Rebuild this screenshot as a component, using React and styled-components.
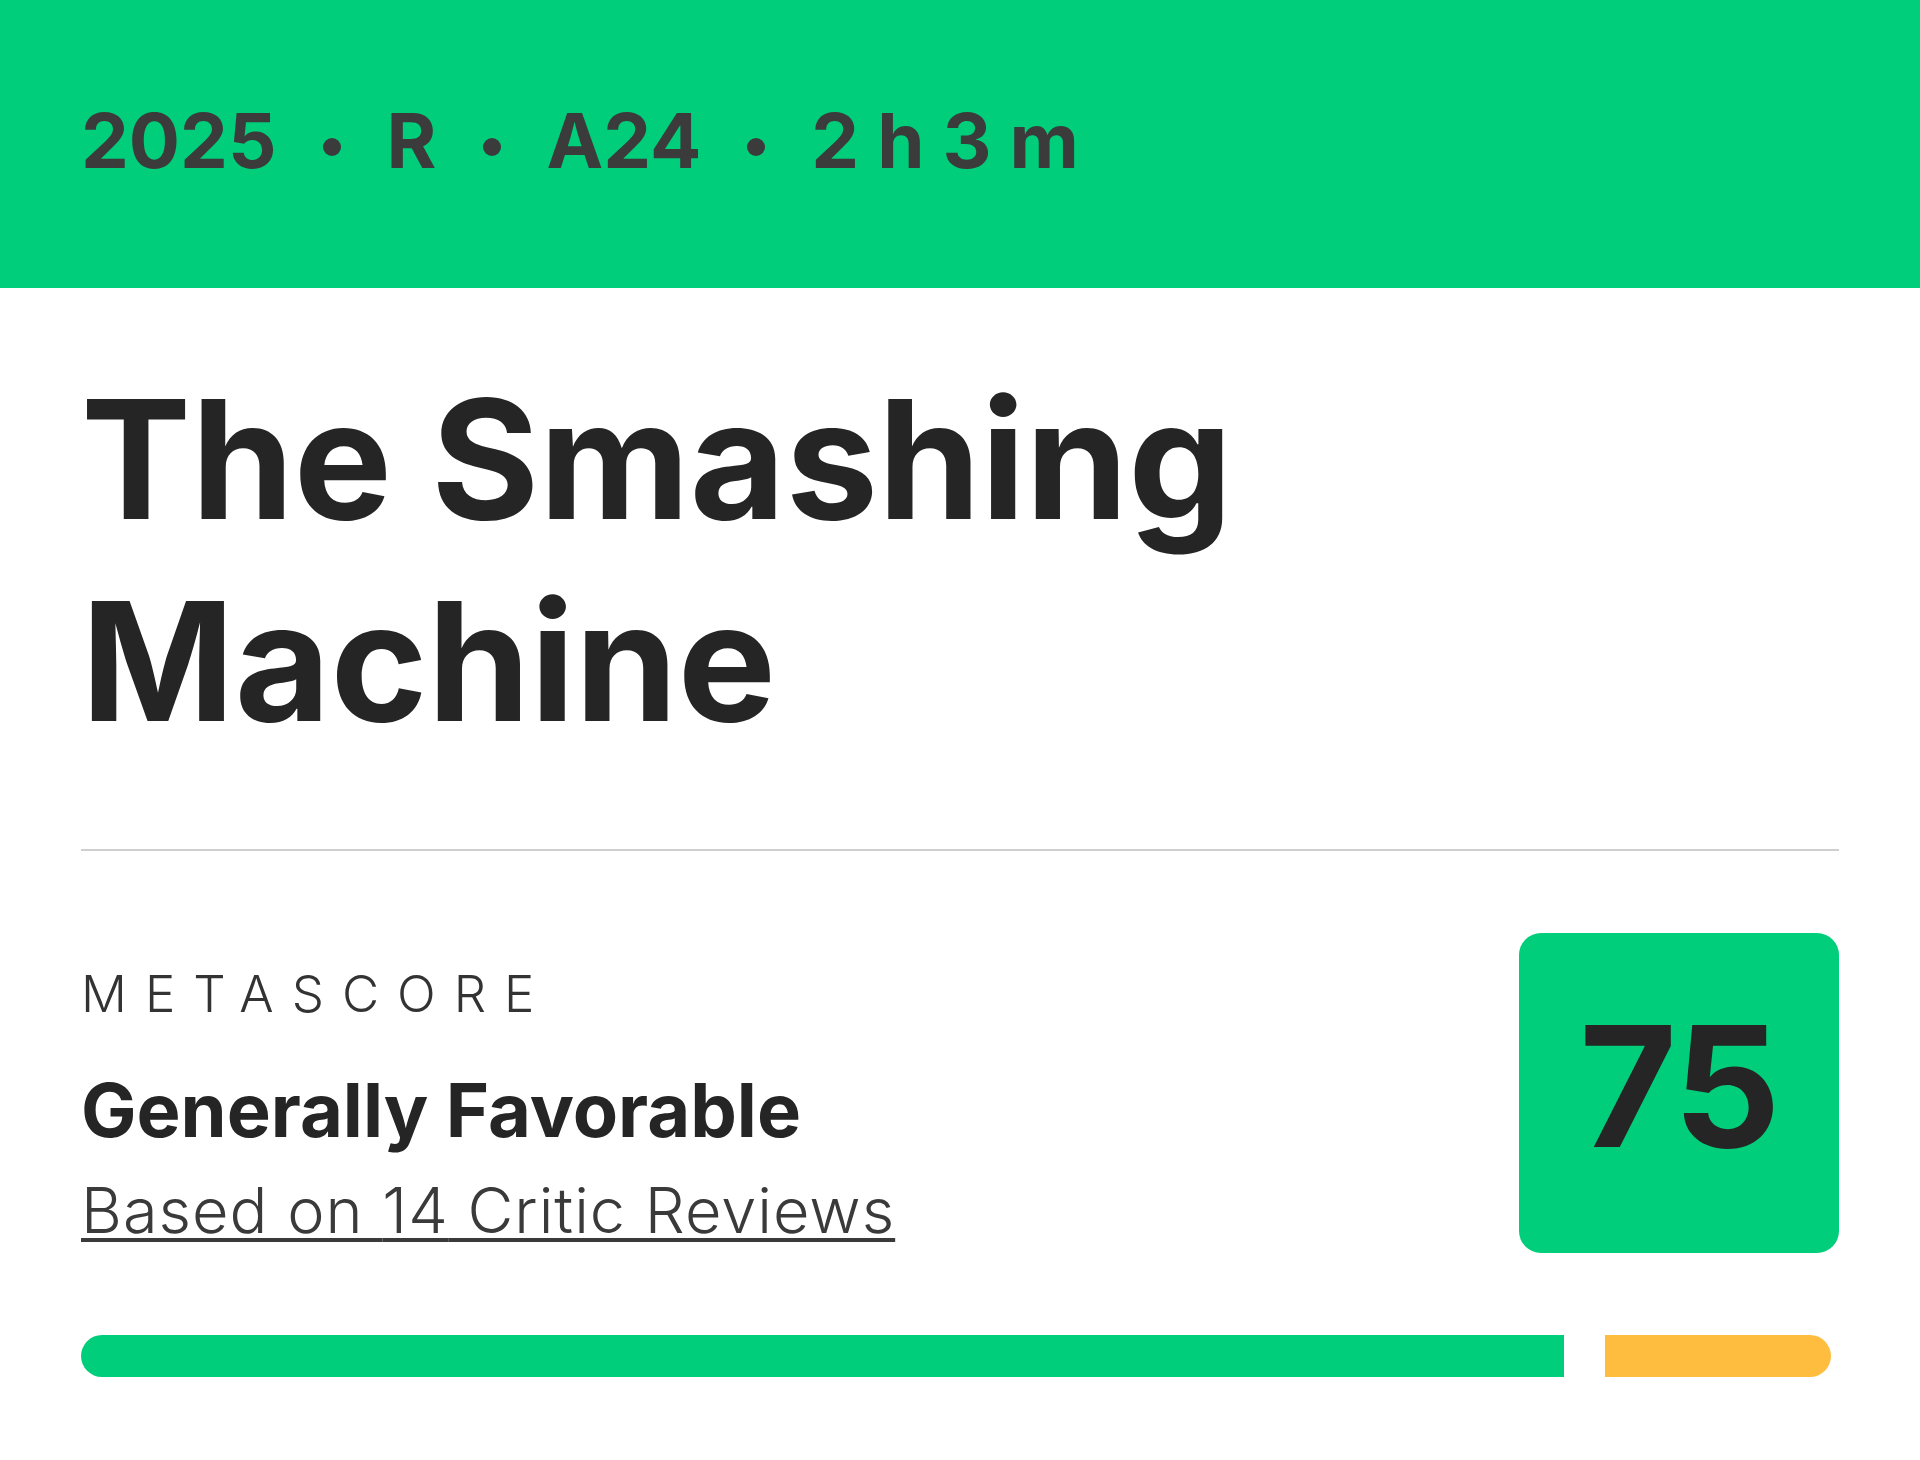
import React from "react";
import styled, { createGlobalStyle } from "styled-components";

const colors = {
	green: "#00ce7a",
	yellow: "#ffbd3f",
	ink: "#252525",
	metaInk: "#3b3b3b",
	line: "#cfcfcf",
};

const film = {
	meta: ["2025", "R", "A24", "2 h 3 m"],
	title: ["The Smashing", "Machine"],
	verdict: "Generally Favorable",
	reviews: 14,
	score: 75,
	positive: 1483,
	mixed: 226,
};

function App() {
	return (
		<>
			<GlobalStyle />
			<StPage>
				<StHeader>
					{film.meta.map((item, i) => (
						<React.Fragment key={item}>
							{i > 0 && <StDot />}
							<StMetaItem>{item}</StMetaItem>
						</React.Fragment>
					))}
				</StHeader>

				<StBody>
					<StTitle>
						{film.title.map((line) => (
							<span key={line}>{line}</span>
						))}
					</StTitle>

					<StDivider />

					<StScoreRow>
						<StScoreInfo>
							<StLabel>METASCORE</StLabel>
							<StVerdict>{film.verdict}</StVerdict>
							<StReviewsLink href="#">
								Based on {film.reviews} Critic Reviews
							</StReviewsLink>
						</StScoreInfo>
						<StScoreBox>{film.score}</StScoreBox>
					</StScoreRow>

					<StBar>
						<StSegment $color={colors.green} $grow={film.positive} $first />
						<StSegment $color={colors.yellow} $grow={film.mixed} $last />
					</StBar>
				</StBody>
			</StPage>
		</>
	);
}

export default App;

const GlobalStyle = createGlobalStyle`
	* {
		box-sizing: border-box;
	}
	body {
		margin: 0;
		background: #fff;
		font-family: Inter, "Liberation Sans", sans-serif;
		color: ${colors.ink};
	}
`;

const StPage = styled.div`
	width: 1920px;
	min-height: 1460px;
	background: #fff;
`;

const StHeader = styled.header`
	display: flex;
	align-items: center;
	gap: 46px;
	height: 288px;
	padding: 0 81px 8px;
	background-color: ${colors.green};
	color: ${colors.metaInk};
`;

const StMetaItem = styled.span`
	font-size: 76px;
	font-weight: 700;
	line-height: 1;
`;

const StDot = styled.span`
	width: 18px;
	height: 18px;
	margin-top: 14px;
	border-radius: 50%;
	background-color: ${colors.metaInk};
`;

const StBody = styled.main`
	display: flex;
	flex-direction: column;
	padding: 70px 81px 0;
`;

const StTitle = styled.h1`
	display: flex;
	flex-direction: column;
	margin: 0;
	font-size: 165px;
	font-weight: 700;
	line-height: 202px;
	color: ${colors.ink};
`;

const StDivider = styled.hr`
	margin: 87px 0 0;
	border: none;
	height: 2px;
	background-color: ${colors.line};
`;

const StScoreRow = styled.section`
	display: flex;
	justify-content: space-between;
	align-items: flex-start;
	margin-top: 82px;
`;

const StScoreInfo = styled.div`
	display: flex;
	flex-direction: column;
	align-items: flex-start;
	padding-top: 31px;
`;

const StLabel = styled.span`
	font-size: 51px;
	font-weight: 300;
	letter-spacing: 18px;
	line-height: 60px;
	color: #333;
`;

const StVerdict = styled.span`
	margin-top: 46px;
	font-size: 74px;
	font-weight: 700;
	line-height: 80px;
	color: ${colors.ink};
`;

const StReviewsLink = styled.a`
	margin-top: 22px;
	font-size: 63px;
	font-weight: 300;
	line-height: 76px;
	letter-spacing: 1px;
	color: #3a3a3a;
	text-decoration: underline;
	text-decoration-thickness: 4px;
	text-underline-offset: 5px;
`;

const StScoreBox = styled.div`
	display: flex;
	align-items: center;
	justify-content: center;
	width: 320px;
	height: 320px;
	padding-bottom: 14px;
	border-radius: 22px;
	background-color: ${colors.green};
	font-size: 168px;
	font-weight: 700;
	line-height: 1;
	letter-spacing: -2px;
	color: ${colors.ink};
`;

const StBar = styled.div`
	display: flex;
	gap: 41px;
	margin-top: 82px;
	padding-right: 8px;
`;

const StSegment = styled.div`
	flex: ${(p) => p.$grow} 1 0;
	height: 42px;
	background-color: ${(p) => p.$color};
	border-radius: ${(p) =>
		p.$first ? "21px 0 0 21px" : p.$last ? "0 21px 21px 0" : "0"};
`;
